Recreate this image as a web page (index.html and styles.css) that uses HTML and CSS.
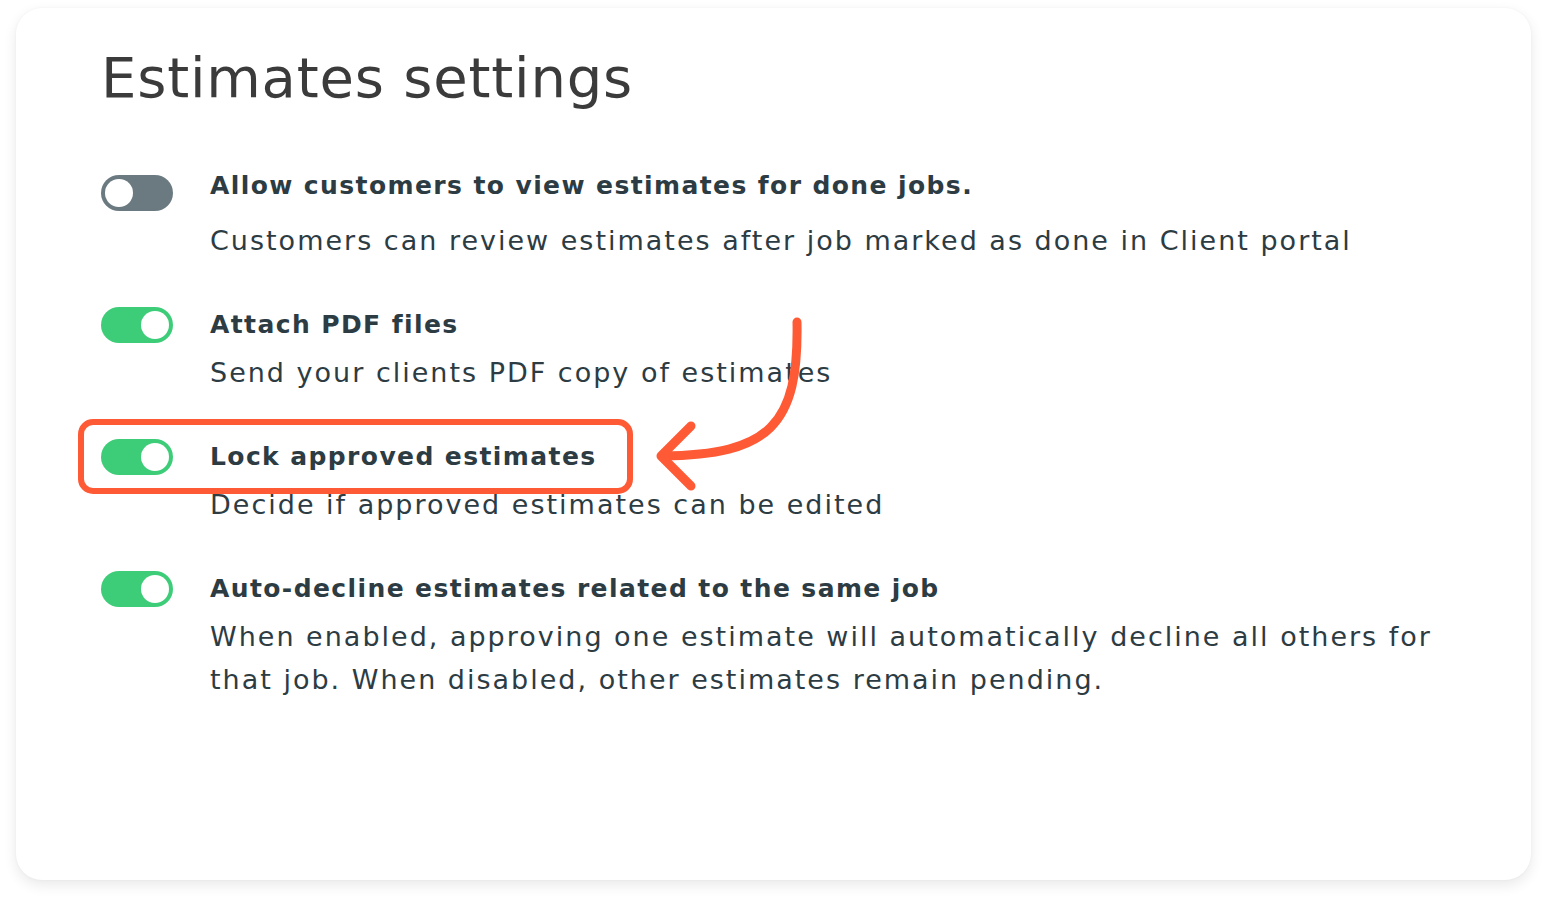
FILE: index.html
```html
<!DOCTYPE html>
<html lang="en">
<head>
<meta charset="utf-8">
<title>Estimates settings</title>
<link rel="stylesheet" href="styles.css">
</head>
<body>
<div class="card">
  <h1 class="heading">Estimates settings</h1>
  <div class="settings">
    <div class="row first">
      <span class="toggle off"><span class="knob"></span></span>
      <div class="text">
        <div class="title">Allow customers to view estimates for done jobs.</div>
        <div class="desc">Customers can review estimates after job marked as done in Client portal</div>
      </div>
    </div>
    <div class="row">
      <span class="toggle on"><span class="knob"></span></span>
      <div class="text">
        <div class="title">Attach PDF files</div>
        <div class="desc">Send your clients PDF copy of estimates</div>
      </div>
    </div>
    <div class="row highlighted">
      <span class="highlight"></span>
      <span class="toggle on"><span class="knob"></span></span>
      <div class="text">
        <div class="title">Lock approved estimates</div>
        <div class="desc">Decide if approved estimates can be edited</div>
      </div>
    </div>
    <div class="row">
      <span class="toggle on"><span class="knob"></span></span>
      <div class="text">
        <div class="title">Auto-decline estimates related to the same job</div>
        <div class="desc">When enabled, approving one estimate will automatically decline all others for that job. When disabled, other estimates remain pending.</div>
      </div>
    </div>
  </div>
  <svg class="arrow" width="1547" height="904" viewBox="0 0 1547 904">
    <path d="M797 322 C 799 425, 770 455, 662 456" fill="none" stroke="#ff5a36" stroke-width="9" stroke-linecap="round"/>
    <path d="M691 426 L 661 456 L 691 486" fill="none" stroke="#ff5a36" stroke-width="9" stroke-linecap="round" stroke-linejoin="round"/>
  </svg>
</div>
</body>
</html>
```
FILE: styles.css
```css
html, body {
  margin: 0;
  padding: 0;
  background: #ffffff;
}
body {
  font-family: "DejaVu Sans", "Open Sans", sans-serif;
  width: 1547px;
  height: 904px;
  overflow: hidden;
}
.card {
  position: relative;
  box-sizing: border-box;
  margin: 8px 16px 0 16px;
  width: 1515px;
  height: 872px;
  background: #ffffff;
  border-radius: 26px;
  box-shadow: 0 5px 14px rgba(0, 0, 0, 0.09), 0 0 3px rgba(0, 0, 0, 0.04);
  padding: 37px 85px 0 85px;
}
.heading {
  margin: 0;
  font-size: 56px;
  line-height: 66px;
  font-weight: 500;
  color: #3b3b3b;
  letter-spacing: 0.8px;
}
.settings {
  margin-top: 64px;
  display: flex;
  flex-direction: column;
  gap: 45px;
}
.row {
  position: relative;
  display: flex;
  align-items: flex-start;
  gap: 37px;
}
.toggle {
  flex: none;
  position: relative;
  box-sizing: border-box;
  width: 72px;
  height: 36px;
  border-radius: 18px;
  display: flex;
  align-items: center;
  padding: 0 4px;
}
.toggle.off {
  background: #6b7a81;
  justify-content: flex-start;
}
.toggle.on {
  background: #3dcd78;
  justify-content: flex-end;
}
.knob {
  width: 28px;
  height: 28px;
  border-radius: 50%;
  background: #ffffff;
}
.text {
  display: flex;
  flex-direction: column;
}
.title {
  font-size: 25px;
  line-height: 36px;
  font-weight: 700;
  color: #2d3c43;
  letter-spacing: 1.4px;
}
.desc {
  margin-top: 8px;
  font-size: 27px;
  line-height: 43px;
  font-weight: 400;
  color: #2d3c43;
  letter-spacing: 2px;
  max-width: 1250px;
}
.row.first .title {
  margin-top: -7px;
}
.row.first .desc {
  margin-top: 15px;
}
.highlight {
  position: absolute;
  left: -23px;
  top: -20px;
  width: 543px;
  height: 63px;
  border: 6px solid #ff5a36;
  border-radius: 15px;
}
.arrow {
  position: absolute;
  left: -16px;
  top: -8px;
  pointer-events: none;
}
```
